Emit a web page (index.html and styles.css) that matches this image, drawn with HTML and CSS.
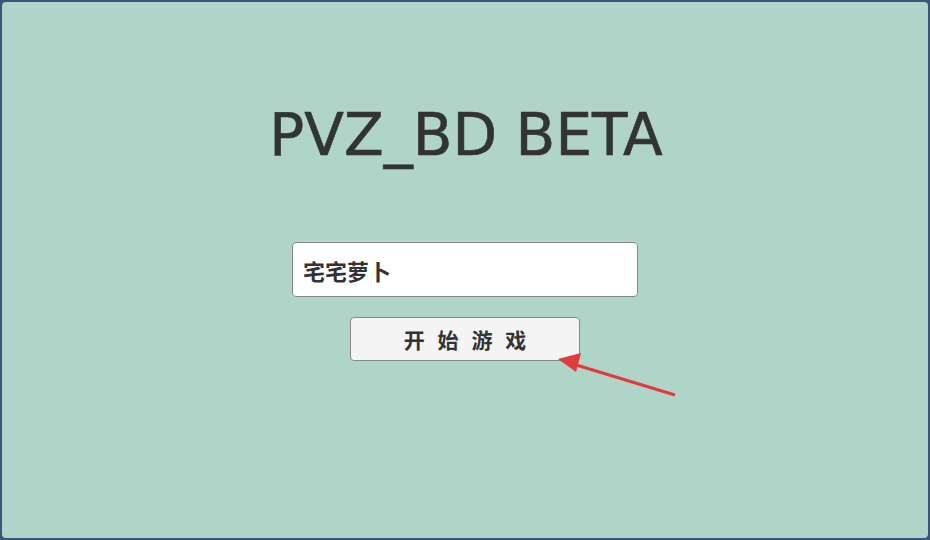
FILE: index.html
```html
<!DOCTYPE html>
<html lang="zh-CN">
<head>
  <meta charset="UTF-8">
  <meta name="viewport" content="width=device-width, initial-scale=1.0">
  <title>PVZ_BD BETA</title>
  <link rel="stylesheet" href="styles.css">
</head>
<body>
  <div class="frame">
    <h1 class="title">PVZ_BD BETA</h1>
    <input type="text" class="name-input" value="宅宅萝卜">
    <div class="start-row">
      <button type="button" class="start-btn">开 始 游 戏</button>
      <!-- 标注箭头 -->
      <svg class="arrow" width="130" height="50" viewBox="0 0 130 50">
        <line x1="122" y1="46" x2="20" y2="15" stroke="#e23a3a" stroke-width="3"/>
        <polygon points="5,10 28,4 23,23" fill="#e23a3a"/>
      </svg>
    </div>
  </div>
</body>
</html>
```

FILE: styles.css
```css
* {
  margin: 0;
  padding: 0;
  box-sizing: border-box;
}
html, body {
  height: 100%;
}
body {
  font-family: 'DejaVu Sans', 'Noto Sans CJK SC', sans-serif;
  background-color: #3a5578;
}
.frame {
  height: 100%;
  background-color: #afd5c9;
  border: 2px solid #3a5578;
  border-radius: 6px;
  display: flex;
  flex-direction: column;
  align-items: center;
  padding-top: 95px;
}
.title {
  font-size: 58px;
  font-weight: 400;
  -webkit-text-stroke: 0.6px #333;
  color: #333;
  line-height: 76px;
  margin-left: 2px;
}
.name-input {
  margin-top: 69px;
  width: 346px;
  height: 55px;
  padding: 0 10px;
  font-family: 'Noto Sans CJK SC', sans-serif;
  font-size: 22px;
  font-weight: 700;
  color: #333;
  background-color: #fff;
  border: 1px solid #888;
  border-radius: 4px;
  outline: none;
}
.start-row {
  position: relative;
  margin-top: 20px;
}
.start-btn {
  width: 230px;
  height: 44px;
  padding-left: 4px;
  font-family: 'Noto Sans CJK SC', sans-serif;
  font-size: 21px;
  font-weight: 700;
  letter-spacing: 4px;
  color: #333;
  background-color: #f4f4f4;
  border: 1px solid #888;
  border-radius: 4px;
}
.arrow {
  position: absolute;
  left: 203px;
  top: 32px;
}
```
